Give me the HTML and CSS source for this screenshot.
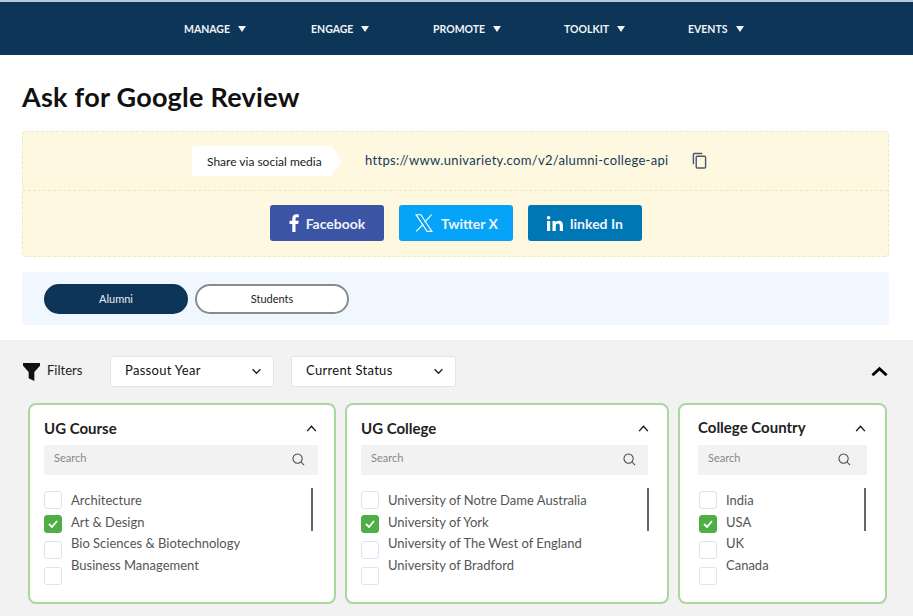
FILE: index.html
```html
<!DOCTYPE html>
<html lang="en">
<head>
    <meta charset="UTF-8">
    <meta name="viewport" content="width=device-width, initial-scale=1.0">
    <title>Ask for Google Review</title>
    <link rel="stylesheet" href="styles.css">
</head>
<body>
    <nav class="topnav">
        <a class="nav-item">MANAGE <span class="nav-arrow"></span></a>
        <a class="nav-item">ENGAGE <span class="nav-arrow"></span></a>
        <a class="nav-item">PROMOTE <span class="nav-arrow"></span></a>
        <a class="nav-item">TOOLKIT <span class="nav-arrow"></span></a>
        <a class="nav-item">EVENTS <span class="nav-arrow"></span></a>
    </nav>

    <h1 class="page-title">Ask for Google Review</h1>

    <section class="share-box">
        <div class="share-top">
            <span class="share-label">Share via social media</span>
            <span class="share-url">https://www.univariety.com/v2/alumni-college-api</span>
            <svg class="copy-icon" viewBox="0 0 16 18" fill="none" stroke="#4a5a68" stroke-width="1.5">
                <path d="M1.5 13V2.5a1 1 0 0 1 1-1H11"/>
                <rect x="4.5" y="4.5" width="10" height="12.5" rx="1"/>
            </svg>
        </div>
        <div class="share-buttons">
            <a class="social-btn btn-facebook">
                <svg class="fb-icon" viewBox="0 0 10 18" fill="#fff"><path d="M6.5 18V10h2.7l.5-3.2H6.500V4.900c0-.9.3-1.600 1.600-1.600h1.700V.4C9.500.3 8.500.2 7.400.2 5 .2 3.300 1.700 3.300 4.400v2.400H.5V10h2.800v8z"/></svg>
                Facebook
            </a>
            <a class="social-btn btn-twitter">
                <svg class="x-icon" viewBox="0 0 24 24" fill="none" stroke="#fff" stroke-width="1.3" stroke-linejoin="miter">
                    <path d="M2.500 2h5.800l13.200 20h-5.800z"/>
                    <path d="M21 2l-8.200 9.200M11 13.300L2.800 22"/>
                </svg>
                Twitter X
            </a>
            <a class="social-btn btn-linkedin">
                <svg class="in-icon" viewBox="0 0 16 15" fill="#fff"><rect x="0" y="5" width="3.200" height="10"/><circle cx="1.600" cy="1.800" r="1.800"/><path d="M5.500 5h3v1.400c.5-.9 1.600-1.700 3.200-1.700 3.200 0 4.300 2 4.300 5V15h-3.200v-4.600c0-1.400-.3-2.900-1.900-2.900-1.700 0-2.200 1.300-2.200 2.800V15H5.500z"/></svg>
                linked In
            </a>
        </div>
    </section>

    <section class="tab-band">
        <button type="button" class="tab tab-active">Alumni</button>
        <button type="button" class="tab">Students</button>
    </section>

    <section class="filters">
        <div class="filter-bar">
            <svg class="funnel" viewBox="0 0 18 19" fill="#111"><path d="M0 0h18v3l-6 6.500V19l-6-3V9.500L0 3z"/></svg>
            <span class="filter-label">Filters</span>
            <div class="select select-year"><span>Passout Year</span> <svg class="chev-down" viewBox="0 0 12 8" fill="none" stroke="#222" stroke-width="1.600"><path d="M1.500 1.500L6 6l4.500-4.500"/></svg></div>
            <div class="select select-status"><span>Current Status</span> <svg class="chev-down" viewBox="0 0 12 8" fill="none" stroke="#222" stroke-width="1.600"><path d="M1.500 1.500L6 6l4.500-4.500"/></svg></div>
            <svg class="collapse-all" viewBox="0 0 18 11" fill="none" stroke="#000" stroke-width="3"><path d="M1.500 9.500L9 2.500l7.500 7"/></svg>
        </div>

        <div class="cards">
            <div class="card card-course">
                <div class="card-head"><span>UG Course</span><svg class="chev-up" viewBox="0 0 12 8" fill="none" stroke="#111" stroke-width="1.500"><path d="M1 7l5-5.500L11 7"/></svg></div>
                <div class="search"><span>Search</span><svg class="search-icon" viewBox="0 0 14 14" fill="none" stroke="#444" stroke-width="1.100"><circle cx="6" cy="6" r="5"/><path d="M9.700 9.700L13 13"/></svg></div>
                <div class="list">
                    <div class="checks">
                        <span class="check"></span>
                        <span class="check checked"><svg viewBox="0 0 10 8" fill="none" stroke="#fff" stroke-width="1.800"><path d="M1 4l3 3 5-6"/></svg></span>
                        <span class="check"></span>
                        <span class="check"></span>
                    </div>
                    <div class="labels">
                        <div>Architecture</div>
                        <div>Art &amp; Design</div>
                        <div>Bio Sciences &amp; Biotechnology</div>
                        <div>Business Management</div>
                    </div>
                    <div class="scrollbar"></div>
                </div>
            </div>

            <div class="card card-college">
                <div class="card-head"><span>UG College</span><svg class="chev-up" viewBox="0 0 12 8" fill="none" stroke="#111" stroke-width="1.500"><path d="M1 7l5-5.500L11 7"/></svg></div>
                <div class="search"><span>Search</span><svg class="search-icon" viewBox="0 0 14 14" fill="none" stroke="#444" stroke-width="1.100"><circle cx="6" cy="6" r="5"/><path d="M9.700 9.700L13 13"/></svg></div>
                <div class="list">
                    <div class="checks">
                        <span class="check"></span>
                        <span class="check checked"><svg viewBox="0 0 10 8" fill="none" stroke="#fff" stroke-width="1.800"><path d="M1 4l3 3 5-6"/></svg></span>
                        <span class="check"></span>
                        <span class="check"></span>
                    </div>
                    <div class="labels">
                        <div>University of Notre Dame Australia</div>
                        <div>University of York</div>
                        <div>University of The West of England</div>
                        <div>University of Bradford</div>
                    </div>
                    <div class="scrollbar"></div>
                </div>
            </div>

            <div class="card card-country">
                <div class="card-head"><span>College Country</span><svg class="chev-up" viewBox="0 0 12 8" fill="none" stroke="#111" stroke-width="1.500"><path d="M1 7l5-5.500L11 7"/></svg></div>
                <div class="search"><span>Search</span><svg class="search-icon" viewBox="0 0 14 14" fill="none" stroke="#444" stroke-width="1.100"><circle cx="6" cy="6" r="5"/><path d="M9.700 9.700L13 13"/></svg></div>
                <div class="list">
                    <div class="checks">
                        <span class="check"></span>
                        <span class="check checked"><svg viewBox="0 0 10 8" fill="none" stroke="#fff" stroke-width="1.800"><path d="M1 4l3 3 5-6"/></svg></span>
                        <span class="check"></span>
                        <span class="check"></span>
                    </div>
                    <div class="labels">
                        <div>India</div>
                        <div>USA</div>
                        <div>UK</div>
                        <div>Canada</div>
                    </div>
                    <div class="scrollbar"></div>
                </div>
            </div>
        </div>
    </section>
</body>
</html>
```

FILE: styles.css
```css
* {
    box-sizing: border-box;
}

html, body {
    height: 616px;
    overflow: hidden;
}

body {
    margin: 0;
    font-family: "Lato", "Liberation Sans", sans-serif;
    background-color: #fff;
    color: #222;
}

/* top nav */
.topnav {
    display: grid;
    grid-template-columns: 127px 122px 131px 124px auto;
    align-items: center;
    height: 55px;
    padding-left: 184px;
    background-color: #0c3558;
    border-top: 2px solid #b9c8d6;
}

.nav-item {
    display: flex;
    align-items: center;
    gap: 8px;
    font-size: 10.500px;
    font-weight: 700;
    color: #f2f4f6;
}

.nav-arrow {
    width: 0;
    height: 0;
    border-left: 4px solid transparent;
    border-right: 4px solid transparent;
    border-top: 6px solid #f2f4f6;
}

.page-title {
    margin: 0;
    padding: 24px 0 0 22px;
    height: 76px;
    font-size: 27px;
    line-height: 36px;
    font-weight: 700;
    letter-spacing: 0.25px;
    color: #111;
}

/* share box */
.share-box {
    height: 126px;
    margin: 0 24px 15px 22px;
    background-color: #fef8e1;
    border: 1px dashed #f0e7c4;
    border-radius: 4px;
}

.share-top {
    display: flex;
    align-items: center;
    height: 59px;
    padding-left: 169px;
    border-bottom: 1px dashed #efe6c6;
}

.share-label {
    display: flex;
    align-items: center;
    width: 150px;
    height: 30px;
    padding-left: 15px;
    font-size: 12px;
    color: #222;
    background-color: #fff;
    border-radius: 4px 0 0 4px;
    clip-path: polygon(0 0, 93% 0, 100% 50%, 93% 100%, 0 100%);
}

.share-url {
    margin: 0 0 2px 23px;
    width: 304px;
    font-size: 13px;
    white-space: nowrap;
    letter-spacing: 0.32px;
    color: #163a58;
}

.copy-icon {
    width: 15px;
    height: 17px;
    margin: 0 0 2px 23px;
}

.share-buttons {
    display: flex;
    gap: 15px;
    padding: 14px 0 0 247px;
}

.social-btn {
    display: flex;
    align-items: center;
    justify-content: center;
    gap: 7px;
    width: 114px;
    height: 36px;
    font-size: 14px;
    font-weight: 700;
    color: #eef3fa;
    border-radius: 3px;
}

.btn-facebook {
    background-color: #3b55a4;
}

.btn-twitter {
    background-color: #06a4f9;
}

.btn-linkedin {
    background-color: #0077b5;
}

.fb-icon {
    width: 10px;
    height: 18px;
}

.x-icon {
    width: 20px;
    height: 20px;
}

.in-icon {
    width: 16px;
    height: 15px;
}

/* alumni / students */
.tab-band {
    display: flex;
    align-items: center;
    gap: 7px;
    height: 53px;
    margin: 0 24px 15px 22px;
    padding-left: 22px;
    background-color: #f1f7fe;
    border-radius: 4px;
}

.tab {
    width: 154px;
    height: 30px;
    font-family: inherit;
    font-size: 11px;
    color: #222;
    background-color: #fff;
    border: 2px solid #8b8b8b;
    border-radius: 15px;
}

.tab-active {
    width: 144px;
    color: #e9eef3;
    background-color: #0c3558;
    border-color: #0c3558;
}

/* filters */
.filters {
    height: 276px;
    background-color: #f2f2f2;
}

.filter-bar {
    display: flex;
    align-items: center;
    height: 63px;
    padding: 0 25px 0 23px;
}

.funnel {
    width: 17px;
    height: 18px;
    margin-top: 1px;
}

.filter-label {
    width: 63px;
    margin: 0 0 3px 7px;
    font-size: 13px;
    color: #222;
}

.select {
    display: flex;
    align-items: center;
    justify-content: space-between;
    height: 31px;
    padding: 0 11px 0 14px;
    font-size: 13px;
    letter-spacing: 0.3px;
    color: #111;
    background-color: #fff;
    border: 1px solid #e4e4e4;
    border-radius: 2px;
}

.select span {
    margin-bottom: 3px;
}

.select-year {
    width: 164px;
    margin-right: 17px;
}

.select-status {
    width: 165px;
}

.chev-down {
    width: 11px;
    height: 7px;
}

.collapse-all {
    width: 17px;
    height: 11px;
    margin-left: auto;
}

.cards {
    display: grid;
    grid-template-columns: 308px 324px 209px;
    gap: 9px;
    padding-left: 28px;
}

.card {
    height: 201px;
    padding: 0 16px 0 14px;
    background-color: #fff;
    border: 2px solid #a8d89e;
    border-radius: 8px;
}

.card-college {
    padding-right: 19px;
}

.card-country {
    padding: 0 18px 0 18px;
}

.card-head {
    display: flex;
    align-items: center;
    justify-content: space-between;
    height: 40px;
    padding: 6px 1px 0 0;
    font-size: 15px;
    font-weight: 700;
    color: #222;
}

.card-college .card-head {
    padding-right: 0;
    margin-right: -1px;
}

.card-country .card-head span {
    margin-top: -3px;
}

.chev-up {
    width: 11px;
    height: 7px;
}

.search {
    display: flex;
    justify-content: space-between;
    height: 30px;
    padding: 6px 13px 0 10px;
    font-size: 11px;
    color: #888;
    background-color: #f2f2f2;
}

.card-college .search {
    padding-right: 12px;
}

.card-country .search {
    padding-right: 16px;
}

.search-icon {
    width: 13px;
    height: 13px;
    margin-top: 2px;
}

.list {
    display: flex;
    padding-top: 16px;
}

.card-country .list {
    padding-left: 1px;
}

.checks {
    display: flex;
    flex-direction: column;
    width: 27px;
    flex-shrink: 0;
}

.check {
    display: flex;
    align-items: center;
    justify-content: center;
    width: 18px;
    height: 18px;
    margin-bottom: 8px;
    background-color: #fff;
    border: 1px solid #d9e5f2;
    border-radius: 3px;
}

.check.checked {
    background-color: #4fae45;
    border-color: #4fae45;
}

.check.checked svg {
    width: 10px;
    height: 8px;
}

.check:first-child {
    margin-bottom: 6px;
}

.labels {
    flex: 1;
    margin-top: -1px;
    font-size: 13px;
    line-height: 21.700px;
    color: #555;
    white-space: nowrap;
}

.scrollbar {
    width: 2px;
    height: 43px;
    margin-top: -3px;
    margin-right: 5px;
    background-color: #666;
}

.card-college .scrollbar {
    margin-right: -1px;
}

.card-country .scrollbar {
    margin-right: 1px;
}
```
